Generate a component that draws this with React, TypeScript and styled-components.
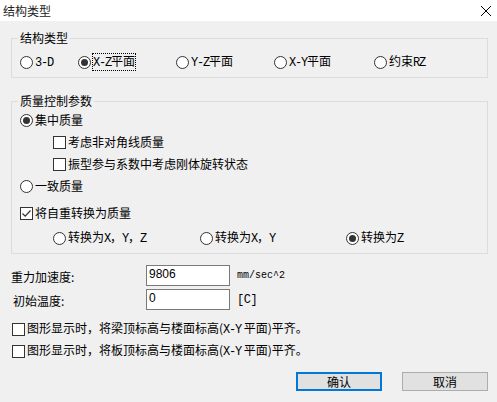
import React from 'react';
import styled, { createGlobalStyle } from 'styled-components';

const GlobalStyle = createGlobalStyle`
  html, body {
    margin: 0;
    padding: 0;
    background: #f0f0f0;
  }
  body {
    font-family: "Noto Sans CJK SC", "Noto Sans", sans-serif;
    font-size: 12px;
    color: #000;
  }
`;

const Dialog = styled.div`
  width: 497px;
  height: 402px;
  background: #f0f0f0;
  display: flex;
  flex-direction: column;
  overflow: hidden;
`;

const TitleBar = styled.div`
  height: 21px;
  flex-shrink: 0;
  background: #fff;
  display: flex;
  align-items: center;
  justify-content: space-between;
  padding: 0 5px 0 3px;
`;

const TitleText = styled.span`
  font-size: 12px;
  line-height: 14px;
  color: #222;
`;

const CloseButton = styled.span`
  display: flex;
  width: 12px;
  height: 12px;
`;

const Body = styled.div`
  display: flex;
  flex-direction: column;
  padding: 0 9px 0 11px;
`;

const Group = styled.div<{ $top: number }>`
  position: relative;
  margin-top: ${(p) => p.$top}px;
  border: 1px solid #dcdcdc;
  display: flex;
  flex-direction: column;
`;

const Legend = styled.span`
  position: absolute;
  top: -8px;
  left: 6px;
  padding: 0 2px;
  line-height: 14px;
  background: #f0f0f0;
`;

const TypeRow = styled.div`
  display: grid;
  grid-template-columns: 58px 98px 98px 100px 1fr;
  height: 16px;
  align-items: center;
  padding: 15px 0 7px 8px;
`;

const MassBody = styled.div`
  display: flex;
  flex-direction: column;
  padding: 7px 0 4px 8px;
`;

const Row = styled.div<{ $indent?: number; $top?: number }>`
  height: 22px;
  display: flex;
  align-items: center;
  padding-left: ${(p) => p.$indent ?? 0}px;
  margin-top: ${(p) => p.$top ?? 0}px;
`;

const ConvertRow = styled(Row)`
  display: grid;
  grid-template-columns: 147px 146px 1fr;
`;

const Option = styled.label`
  display: flex;
  align-items: center;
  gap: 2px;
  line-height: 14px;
  white-space: nowrap;
`;

const RadioCircle = styled.span<{ $checked?: boolean }>`
  width: 13px;
  height: 13px;
  box-sizing: border-box;
  border: 1px solid #333;
  border-radius: 50%;
  background: #fff;
  display: flex;
  align-items: center;
  justify-content: center;
  flex-shrink: 0;
  &::after {
    content: '';
    display: ${(p) => (p.$checked ? 'block' : 'none')};
    width: 7px;
    height: 7px;
    border-radius: 50%;
    background: #333;
  }
`;

const CheckBox = styled.span`
  width: 13px;
  height: 13px;
  box-sizing: border-box;
  border: 1px solid #333;
  background: #fff;
  display: flex;
  align-items: center;
  justify-content: center;
  flex-shrink: 0;
`;

const OptionText = styled.span<{ $focus?: boolean }>`
  line-height: 12px;
  padding: 1px 0;
  outline: ${(p) => (p.$focus ? '1px dotted #000' : 'none')};
`;

const Lat = styled.span`
  font-family: "Liberation Mono", monospace;
  font-size: 12px;
  letter-spacing: -1.2px;
`;

const FieldRows = styled.div`
  display: flex;
  flex-direction: column;
  gap: 3px;
  margin-top: 11px;
`;

const FieldRow = styled.div`
  display: grid;
  grid-template-columns: 135px 84px auto;
  align-items: center;
  height: 21px;
`;

const FieldLabel = styled.span<{ $shift?: number }>`
  padding-left: ${(p) => p.$shift ?? 0}px;
  padding-top: 2px;
  line-height: 14px;
`;

const TextBox = styled.div`
  box-sizing: border-box;
  height: 21px;
  border: 1px solid #7a7a7a;
  background: #fff;
  padding: 1px 2px;
  font-family: "Liberation Sans", Arial, sans-serif;
  font-size: 12px;
  line-height: 15px;
`;

const Unit = styled.span<{ $size: number }>`
  padding-left: 7px;
  font-family: "Liberation Mono", monospace;
  font-size: ${(p) => p.$size}px;
  letter-spacing: ${(p) => (p.$size === 10 ? 0 : -0.5)}px;
`;

const CheckRows = styled.div`
  display: flex;
  flex-direction: column;
  margin-top: 8px;
  padding-left: 1px;
`;

const ButtonBar = styled.div`
  display: flex;
  justify-content: flex-end;
  gap: 20px;
  margin-top: 10px;
`;

const Button = styled.div<{ $default?: boolean }>`
  box-sizing: border-box;
  width: 86px;
  height: 19px;
  background: #e1e1e1;
  border: ${(p) => (p.$default ? '2px solid #0078d7' : '1px solid #adadad')};
  display: flex;
  align-items: center;
  justify-content: center;
  font-size: 12px;
  line-height: 14px;
`;

const Radio: React.FC<{ checked?: boolean; focus?: boolean; children: React.ReactNode }> = ({
  checked,
  focus,
  children,
}) => (
  <Option>
    <RadioCircle $checked={checked} />
    <OptionText $focus={focus}>{children}</OptionText>
  </Option>
);

const Check: React.FC<{ checked?: boolean; children: React.ReactNode }> = ({ checked, children }) => (
  <Option>
    <CheckBox>
      {checked && (
        <svg width="11" height="11" viewBox="0 0 11 11">
          <path d="M1.5 5.5 L4.2 8.2 L9.5 2.5" fill="none" stroke="#333" strokeWidth="1.2" />
        </svg>
      )}
    </CheckBox>
    <OptionText>{children}</OptionText>
  </Option>
);

export default function App() {
  return (
    <Dialog>
      <GlobalStyle />
      <TitleBar>
        <TitleText>结构类型</TitleText>
        <CloseButton>
          <svg width="12" height="12" viewBox="0 0 12 12">
            <path d="M1 1 L11 11 M11 1 L1 11" stroke="#000" strokeWidth="1" />
          </svg>
        </CloseButton>
      </TitleBar>
      <Body>
        <Group $top={17}>
          <Legend>结构类型</Legend>
          <TypeRow>
            <Radio><Lat>3-D</Lat></Radio>
            <Radio checked focus><Lat>X-Z</Lat>平面</Radio>
            <Radio><Lat>Y-Z</Lat>平面</Radio>
            <Radio><Lat>X-Y</Lat>平面</Radio>
            <Radio>约束<Lat>RZ</Lat></Radio>
          </TypeRow>
        </Group>

        <Group $top={23}>
          <Legend>质量控制参数</Legend>
          <MassBody>
            <Row>
              <Radio checked>集中质量</Radio>
            </Row>
            <Row $indent={33}>
              <Check>考虑非对角线质量</Check>
            </Row>
            <Row $indent={33}>
              <Check>振型参与系数中考虑刚体旋转状态</Check>
            </Row>
            <Row>
              <Radio>一致质量</Radio>
            </Row>
            <Row $top={5}>
              <Check checked>将自重转换为质量</Check>
            </Row>
            <ConvertRow $indent={33} $top={3}>
              <Radio>转换为<Lat>X</Lat>，<Lat>Y</Lat>，<Lat>Z</Lat></Radio>
              <Radio>转换为<Lat>X</Lat>，<Lat>Y</Lat></Radio>
              <Radio checked>转换为<Lat>Z</Lat></Radio>
            </ConvertRow>
          </MassBody>
        </Group>

        <FieldRows>
          <FieldRow>
            <FieldLabel>重力加速度:</FieldLabel>
            <TextBox>9806</TextBox>
            <Unit $size={10}>mm/sec^2</Unit>
          </FieldRow>
          <FieldRow>
            <FieldLabel $shift={2}>初始温度:</FieldLabel>
            <TextBox>0</TextBox>
            <Unit $size={12}>[C]</Unit>
          </FieldRow>
        </FieldRows>

        <CheckRows>
          <Row>
            <Check>图形显示时，将梁顶标高与楼面标高(<Lat>X-Y</Lat> 平面)平齐。</Check>
          </Row>
          <Row>
            <Check>图形显示时，将板顶标高与楼面标高(<Lat>X-Y</Lat> 平面)平齐。</Check>
          </Row>
        </CheckRows>

        <ButtonBar>
          <Button $default>确认</Button>
          <Button>取消</Button>
        </ButtonBar>
      </Body>
    </Dialog>
  );
}
